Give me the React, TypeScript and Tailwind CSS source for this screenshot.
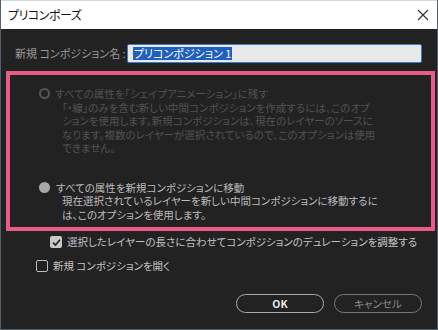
import React from 'react';

const font = "font-['Noto_Sans_CJK_JP','Noto_Sans',sans-serif] [font-feature-settings:'palt']";

const disabledLines = [
  '「・線」のみを含む新しい中間コンポジションを作成するには、このオプ',
  'ションを使用します。新規コンポジションは、現在のレイヤーのソースに',
  'なります。複数のレイヤーが選択されているので、このオプションは使用',
  'できません。',
];

const moveLines = [
  '現在選択されているレイヤーを新しい中間コンポジションに移動するに',
  'は、このオプションを使用します。',
];

const App: React.FC = () => {
  return (
    <div className={`w-[438px] h-[330px] bg-[#222222] border-x border-b border-[#52606c] flex flex-col ${font}`}>
      {/* title bar */}
      <div className="h-[29px] bg-white flex items-center justify-between pl-[7px] pr-[8px] border-t border-[#d8d8d8]">
        <span className="text-[12px] text-[#111] tracking-[-0.5px]">プリコンポーズ</span>
        <svg width="12" height="12" viewBox="0 0 12 12" className="stroke-[#333]" strokeWidth="1.2">
          <path d="M1 1 L11 11 M11 1 L1 11" />
        </svg>
      </div>

      <div className="flex-1 flex flex-col">
        {/* name row */}
        <div className="mt-[15px] h-[19px] flex items-center pl-[14px] pr-[15px]">
          <span className="text-[11px] text-[#9a9a9a] whitespace-nowrap">新規 コンポジション名 :</span>
          <div className="ml-auto w-[295px] h-[19px] shrink-0 bg-[#e8e8e8] border border-[#3b7ccb] rounded-[2px] flex items-center pl-[5px]">
            <span className="bg-[#1f5fbf] text-white text-[11px] leading-[13px] px-[1px] whitespace-nowrap">プリコンポジション 1</span>
          </div>
        </div>

        {/* highlighted options */}
        <div className="mt-[8px] ml-[5px] mr-[2px] h-[160px] border-[4px] border-[#ec5a86] pt-[12px] pl-[29px] text-[10.5px] leading-[13.5px] whitespace-nowrap">
          <div className="text-[#525252]">
            <div className="flex items-center">
              <span className="block w-[11px] h-[11px] shrink-0 rounded-full border-2 border-[#565656] mr-[5px]" />
              <span>すべての属性を「シェイプアニメーション」に残す</span>
            </div>
            {disabledLines.map((line) => (
              <div key={line} className="pl-[23px]">{line}</div>
            ))}
          </div>

          <div className="mt-[26px] text-[#bcbcbc]">
            <div className="flex items-center">
              <span className="block w-[11px] h-[11px] shrink-0 rounded-full bg-[#a8a8a8] mr-[6px]" />
              <span>すべての属性を新規コンポジションに移動</span>
            </div>
            {moveLines.map((line) => (
              <div key={line} className="pl-[23px]">{line}</div>
            ))}
          </div>
        </div>

        {/* checkboxes */}
        <div className="mt-[4px] pl-[49px] flex items-center h-[14px] text-[10.5px] text-[#c2c2c2] whitespace-nowrap">
          <span className="w-[12px] h-[12px] shrink-0 rounded-[2px] bg-[#c8c8c8] flex items-center justify-center mr-[5px]">
            <svg width="9" height="9" viewBox="0 0 9 9" fill="none" stroke="#222" strokeWidth="1.6">
              <path d="M1 4.6 L3.5 7 L8 1.8" />
            </svg>
          </span>
          <span>選択したレイヤーの長さに合わせてコンポジションのデュレーションを調整する</span>
        </div>
        <div className="mt-[10px] pl-[35px] flex items-center h-[14px] text-[10.5px] text-[#c2c2c2] whitespace-nowrap">
          <span className="block w-[12px] h-[12px] shrink-0 rounded-[2px] border-[1.5px] border-[#bdbdbd] mr-[5px]" />
          <span>新規 コンポジションを開く</span>
        </div>

        {/* buttons */}
        <div className="mt-[21px] flex justify-end gap-[10px] pr-[15px]">
          <button className="w-[88px] h-[19px] rounded-full border-[1.5px] border-[#a9a9a9] text-[10.5px] text-[#e6e6e6] font-bold flex items-center justify-center">
            OK
          </button>
          <button className="w-[88px] h-[19px] rounded-full border-[1.5px] border-[#777] text-[10.5px] text-[#8a8a8a] flex items-center justify-center">
            キャンセル
          </button>
        </div>
      </div>
    </div>
  );
};

export default App;
